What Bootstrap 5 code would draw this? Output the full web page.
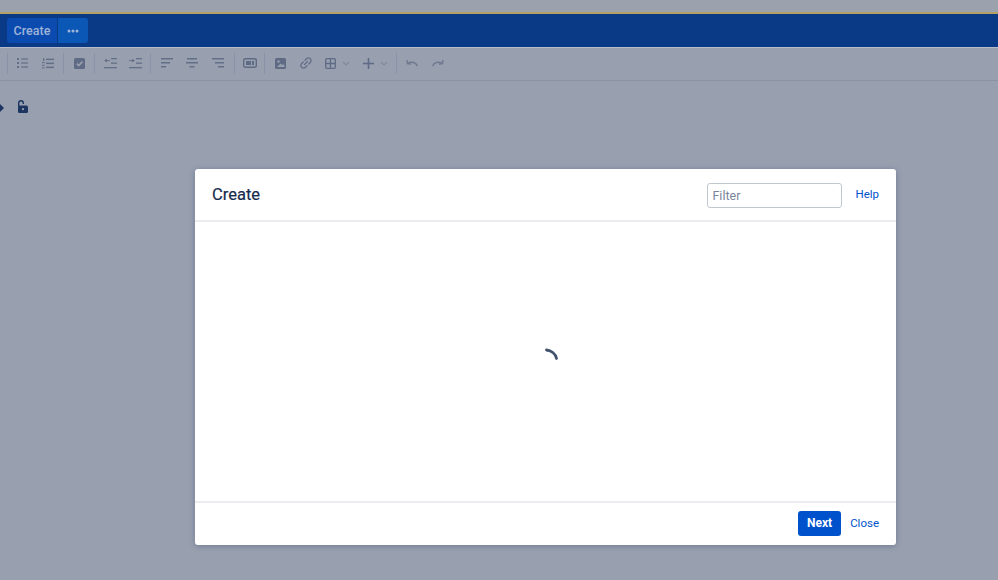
<!DOCTYPE html>
<html lang="en"><head><meta charset="utf-8"><title>Create</title>
<link href="https://cdn.jsdelivr.net/npm/bootstrap@5.3.0/dist/css/bootstrap.min.css" rel="stylesheet">
<style>
html,body{height:100%;overflow:hidden}
body{background:#98a0b0;font-family:Roboto,"Noto Sans",sans-serif;color:#172b4d}
.topstrip{height:12px;background:#9ca1ae}
.goldline{height:2px;background:#b3a066}
.mainbar{height:33px;background:#0a3a86;padding:4px 7px 3px}
.mainbar .btn{font-size:12.500px;font-weight:500;color:#9fb4d8;background:#0b4bb0;border:0;border-radius:3px;height:25px;line-height:25px;padding:0}
.btn-create{width:50px;border-top-right-radius:0!important;border-bottom-right-radius:0!important}
.btn-more{width:30px;margin-left:1px;background:#0b57b5!important;border-top-left-radius:0!important;border-bottom-left-radius:0!important}
.edgeline{height:1px;background:#b6bcc9}
.toolstrip{height:33px;padding:0 0 2px 7px;border-bottom:1px solid #8a92a6}
.tool-gap{width:1px;height:21px;background:#8992a6;flex:none}
.tool{display:flex;justify-content:center;align-items:center;flex:none;height:30px}
.tool svg{display:block}
.lockrow{padding:19px 0 0 0;height:40px}
.dlg-layer{position:absolute;inset:0}
.dlg{position:absolute;left:195px;top:169px;width:701px;height:376px;background:#fff;border-radius:3px;box-shadow:0 1px 6px rgba(9,30,66,.28)}
.dlg-head{height:53px;border-bottom:2px solid #ebecf0;padding:0 17px}
.dlg-title{font-size:16.500px;font-weight:400;color:#172b4d;margin:0;line-height:1;padding-top:1px;-webkit-text-stroke:.2px #172b4d}
.filter-box{width:135px;height:25px;margin-top:1px;border:1px solid #c1c7d0;border-radius:3px;font-size:12.500px;padding:0 4px;color:#5e6c84;font-family:inherit}
.filter-box::placeholder{color:#7a869a;opacity:1}
.linkish{font-size:11.500px;color:#0052cc;text-decoration:none}
.dlg-body{height:279px}
.dlg-foot{height:44px;border-top:2px solid #ebecf0;padding:0 17px 0 0}
.next-btn{background:#0052cc;color:#fff;font-size:12px;font-weight:700;border:0;border-radius:3px;width:43px;height:25px;padding:0;line-height:25px;margin-top:-1px}
</style></head><body>
<div class="topstrip"></div>
<div class="goldline"></div>
<div class="mainbar d-flex">
  <button class="btn btn-create">Create</button>
  <button class="btn btn-more d-flex align-items-center justify-content-center" aria-label="More"><svg width="12" height="4" viewBox="0 0 12 4" fill="#9fb4d8"><circle cx="2" cy="2" r="1.500"/><circle cx="6" cy="2" r="1.500"/><circle cx="10" cy="2" r="1.500"/></svg></button>
</div>
<div class="edgeline"></div>
<div class="toolstrip d-flex align-items-center">
  <span class="tool-gap"></span>
  <span class="tool" style="width:28px"><svg width="11" height="10" viewBox="0 0 11 10" fill="#636f87"><rect width="2" height="2"/><rect y="4" width="2" height="2"/><rect y="8" width="2" height="2"/><rect x="4" y=".4" width="7" height="1.200"/><rect x="4" y="4.400" width="7" height="1.200"/><rect x="4" y="8.400" width="7" height="1.200"/></svg></span>
  <span class="tool" style="width:24px"><svg width="12" height="11" viewBox="0 0 12 11" fill="#636f87"><rect x="1" width="1.300" height="3"/><rect y="4" width="2.600" height="1.100"/><rect y="6.800" width="2.600" height="1.100"/><rect y="9.400" width="2.600" height="1.100"/><rect x="4" y=".6" width="8" height="1.500"/><rect x="4" y="4.600" width="8" height="1.500"/><rect x="4" y="8.600" width="8" height="1.500"/></svg></span>
  <span class="tool-gap" style="margin-left:3px"></span>
  <span class="tool" style="width:30px"><svg width="11" height="11" viewBox="0 0 11 11"><rect width="11" height="11" rx="1.500" fill="#5f6b84"/><path d="M2.800 5.600 4.800 7.600 8.400 3.600" fill="none" stroke="#98a0b0" stroke-width="1.600"/></svg></span>
  <span class="tool-gap"></span>
  <span class="tool" style="width:30px"><svg width="13" height="11" viewBox="0 0 13 11" fill="#636f87"><rect x="7" width="6" height="1.300"/><path d="M3 .8 0 2.600 3 4.400z"/><rect x="3" y="2.100" width="3" height="1"/><rect x="7" y="4.500" width="6" height="1.300"/><rect y="9" width="13" height="1.300"/></svg></span>
  <span class="tool" style="width:20px"><svg width="13" height="11" viewBox="0 0 13 11" fill="#636f87"><rect x="7" width="6" height="1.300"/><path d="M3 .8 6 2.600 3 4.400z"/><rect y="2.100" width="3" height="1"/><rect x="7" y="4.500" width="6" height="1.300"/><rect y="9" width="13" height="1.300"/></svg></span>
  <span class="tool-gap" style="margin-left:5px"></span>
  <span class="tool" style="width:32px"><svg width="12" height="10" viewBox="0 0 12 10" fill="#636f87"><rect width="12" height="1.500"/><rect y="4" width="9" height="1.500"/><rect y="8" width="5" height="1.500"/></svg></span>
  <span class="tool" style="width:18px"><svg width="12" height="10" viewBox="0 0 12 10" fill="#636f87"><rect width="10" height="1.500" x="1"/><rect y="4" width="12" height="1.500"/><rect x="3.500" y="8" width="5" height="1.500"/></svg></span>
  <span class="tool" style="width:33px"><svg width="12" height="10" viewBox="0 0 12 10" fill="#636f87"><rect width="12" height="1.500"/><rect x="3" y="4" width="9" height="1.500"/><rect x="6" y="8" width="6" height="1.500"/></svg></span>
  <span class="tool-gap"></span>
  <span class="tool" style="width:29px"><svg width="14" height="10" viewBox="0 0 14 10"><rect x=".7" y=".7" width="12.600" height="8.600" rx="1.500" fill="none" stroke="#5f6b84" stroke-width="1.400"/><rect x="3" y="3" width="5" height="4" fill="#5f6b84"/><rect x="9" y="3" width="2" height="4" fill="#5f6b84"/></svg></span>
  <span class="tool-gap"></span>
  <span class="tool" style="width:30px"><svg width="11" height="11" viewBox="0 0 11 11"><rect width="11" height="11" rx="1.500" fill="#5f6b84"/><circle cx="3.500" cy="3.500" r="1.200" fill="#98a0b0"/><path d="M2 9 5.500 5.500 7 7 8 6 9.500 7.500V9z" fill="#98a0b0"/></svg></span>
  <span class="tool" style="width:21px"><svg width="12" height="12" viewBox="0 0 12 12" fill="none" stroke="#636f87" stroke-width="1.300" stroke-linecap="round"><path d="M5 3.200 6.500 1.700A2.300 2.300 0 0 1 10.300 5.500L8.800 7"/><path d="M7 8.800 5.500 10.300A2.300 2.300 0 0 1 1.700 6.500L3.200 5"/><path d="M4.500 7.500 7.500 4.500"/></svg></span>
  <span class="tool" style="width:28px"><svg width="11" height="11" viewBox="0 0 11 11" fill="none" stroke="#5f6b84" stroke-width="1.300"><rect x=".7" y=".7" width="9.600" height="9.600" rx="1"/><path d="M5.500 1V10M1 5.500H10"/></svg></span>
  <span class="tool" style="width:8px;margin-left:-2px"><svg width="8" height="5" viewBox="0 0 8 5" fill="none" stroke="#7f899e" stroke-width="1.200"><path d="M1 1 4 4 7 1"/></svg></span>
  <span class="tool" style="width:37px"><svg width="11" height="11" viewBox="0 0 11 11" fill="#5f6b84"><rect y="4.700" width="11" height="1.600"/><rect x="4.700" width="1.600" height="11"/></svg></span>
  <span class="tool" style="width:8px;margin-left:-7px"><svg width="8" height="5" viewBox="0 0 8 5" fill="none" stroke="#7f899e" stroke-width="1.200"><path d="M1 1 4 4 7 1"/></svg></span>
  <span class="tool-gap" style="margin-left:8px"></span>
  <span class="tool" style="width:30px"><svg width="12" height="8" viewBox="0 0 12 8" fill="none" stroke="#6f7a90" stroke-width="1.600"><path d="M11.300 7C10 3.500 6 2.200 2 4"/><path d="M1 1 1.500 4.700 5 5" stroke-width="1.400"/></svg></span>
  <span class="tool" style="width:22px"><svg width="12" height="8" viewBox="0 0 12 8" fill="none" stroke="#6f7a90" stroke-width="1.600"><path d="M.7 7C2 3.500 6 2.200 10 4"/><path d="M11 1 10.500 4.700 7 5" stroke-width="1.400"/></svg></span>
</div>
<div class="lockrow d-flex align-items-start">
  <svg width="4" height="8" viewBox="0 0 4 8" fill="#1c3561" class="mt-1"><path d="M0 0 4 4 0 8z"/></svg>
  <svg width="11" height="13" viewBox="0 0 11 13" style="margin-left:13px"><path d="M1.700 6.500V3A2.300 2.300 0 0 1 6.300 3V4" fill="none" stroke="#1c3561" stroke-width="1.400"/><rect x="1" y="5.500" width="10" height="7.500" rx="1.500" fill="#1c3561"/><circle cx="6" cy="9.200" r="1.100" fill="#98a0b0"/></svg>
</div>
<div class="dlg-layer">
  <section class="dlg d-flex flex-column">
    <header class="dlg-head d-flex align-items-center">
      <h2 class="dlg-title flex-grow-1">Create</h2>
      <input class="filter-box" type="text" placeholder="Filter" aria-label="Filter">
      <a class="linkish" style="margin-left:13px" href="#">Help</a>
    </header>
    <div class="dlg-body d-flex align-items-center justify-content-center">
      <svg width="24" height="24" viewBox="0 0 24 24" fill="none" stroke="#42526e" stroke-width="2.800" stroke-linecap="round" style="overflow:visible"><path d="M12.500 0C17 .5 21.500 3.500 22.500 8.500"/></svg>
    </div>
    <footer class="dlg-foot d-flex align-items-center justify-content-end">
      <button class="next-btn">Next</button>
      <a class="linkish" style="margin-left:9px" href="#">Close</a>
    </footer>
  </section>
</div>
<script src="https://cdn.jsdelivr.net/npm/bootstrap@5.3.0/dist/js/bootstrap.bundle.min.js"></script>
</body></html>
